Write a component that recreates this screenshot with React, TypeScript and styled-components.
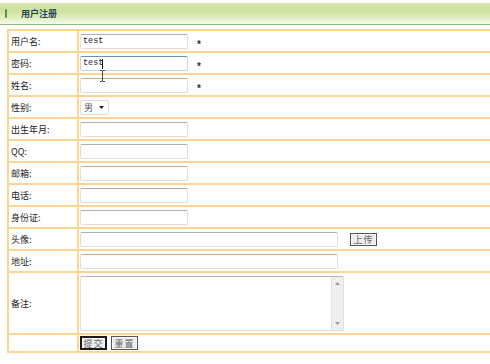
import React from "react";
import styled, { createGlobalStyle } from "styled-components";

const LINE = "#fbd591";

const Global = createGlobalStyle`
  html, body { margin: 0; padding: 0; background: #fff; overflow: hidden; }
  body { font-family: "Noto Sans CJK SC", "Liberation Sans", sans-serif; color: #333; }
`;

const Page = styled.div`
  position: relative;
  width: 490px;
  height: 364px;
  overflow: hidden;
  padding-top: 3px;
  box-sizing: border-box;
  background: #fff;
`;

const Header = styled.div`
  height: 21px;
  display: flex;
  align-items: center;
  gap: 14px;
  padding-left: 5px;
  background: linear-gradient(#d9e7b3 0%, #cde19c 35%, #dfecc0 70%, #f5f9ec 100%);
  border-bottom: 1px solid #97b583;
`;

const Marker = styled.span`
  width: 2px;
  height: 9px;
  border-radius: 1px;
  background: #5f9434;
`;

const Title = styled.span`
  font-size: 9px;
  font-weight: 700;
  color: #1f4552;
  line-height: 1;
`;

const Form = styled.div`
  margin: 4px 0 0 7px;
  width: 492px;
  border-top: 2px solid ${LINE};
  border-left: 2px solid ${LINE};
  display: grid;
  grid-template-columns: 70px 1fr;
`;

const Label = styled.div<{ $h: number }>`
  height: ${(p) => p.$h}px;
  box-sizing: border-box;
  border-right: 2px solid ${LINE};
  border-bottom: 2px solid ${LINE};
  display: flex;
  align-items: center;
  padding-left: 2px;
  font-size: 9px;
  color: #222;
`;

const Value = styled.div<{ $h: number }>`
  height: ${(p) => p.$h}px;
  box-sizing: border-box;
  border-bottom: 2px solid ${LINE};
  display: flex;
  align-items: center;
  padding-left: 1px;
  gap: 9px;
`;

const Field = styled.div`
  position: relative;
  display: flex;
`;

const Input = styled.input<{ $w?: number; $focus?: boolean }>`
  width: ${(p) => p.$w ?? 108}px;
  height: 15px;
  box-sizing: border-box;
  margin: 0;
  padding: 0 2px;
  border: 1px solid ${(p) => (p.$focus ? "#bcd3ec" : "#dedede")};
  border-top-color: ${(p) => (p.$focus ? "#6f8fb3" : "#adadad")};
  border-radius: 2px;
  background: #fff;
  font-family: "Liberation Mono", "DejaVu Sans Mono", monospace;
  font-size: 8.5px;
  color: #222;
  outline: none;
  caret-color: transparent;
`;

const Caret = styled.span`
  position: absolute;
  left: 22px;
  top: 3px;
  width: 1px;
  height: 10px;
  background: #111;
`;

const Star = styled.span`
  font-family: "Liberation Sans", sans-serif;
  font-size: 10px;
  font-weight: 700;
  color: #333;
  position: relative;
  top: 3px;
`;

const SelectBox = styled.div`
  width: 29px;
  height: 15px;
  box-sizing: border-box;
  border: 1px solid #dcdcdc;
  border-radius: 2px;
  background: #fff;
  display: flex;
  align-items: center;
  gap: 6px;
  padding-left: 3px;
  font-size: 9px;
  line-height: 1;
  color: #555;
`;

const AreaBox = styled.div`
  width: 264px;
  height: 55px;
  box-sizing: border-box;
  border: 1px solid #dedede;
  border-top-color: #b5b5b5;
  border-radius: 2px;
  display: flex;
`;

const Area = styled.textarea`
  flex: 1;
  margin: 0;
  border: none;
  resize: none;
  outline: none;
  overflow: hidden;
  font-size: 9px;
`;

const ScrollBar = styled.div`
  width: 11px;
  background: #efefef;
  border-left: 1px solid #e2e2e2;
  display: flex;
  flex-direction: column;
  justify-content: space-between;
  align-items: center;
  padding: 5px 0;
`;

const Button = styled.button<{ $primary?: boolean }>`
  width: 27px;
  height: 14px;
  box-sizing: border-box;
  margin: 0;
  padding: 0;
  border: ${(p) => (p.$primary ? "2px solid #1c1c1c" : "1px solid #555")};
  background: #ececec;
  font-family: "Noto Sans CJK SC", sans-serif;
  font-size: 9px;
  line-height: 1;
  color: #666;
  letter-spacing: 1px;
  box-shadow: inset 0 0 0 1px #f8f8f8;
`;

const Buttons = styled.div`
  display: flex;
  gap: 4px;
`;

const Upload = styled(Button)`
  margin-left: 3px;
  height: 13px;
`;

const IBeam = styled.svg`
  position: absolute;
  left: 99px;
  top: 70px;
`;

const rows: { label: string; value?: string; star?: boolean; focus?: boolean }[] = [
  { label: "用户名:", value: "test", star: true },
  { label: "密码:", value: "test", star: true, focus: true },
  { label: "姓名:", star: true },
];

const plain = ["出生年月:", "QQ:", "邮箱:", "电话:", "身份证:"];

export default function App() {
  return (
    <Page>
      <Global />
      <Header>
        <Marker />
        <Title>用户注册</Title>
      </Header>
      <Form>
        {rows.map((r) => (
          <React.Fragment key={r.label}>
            <Label $h={22}>{r.label}</Label>
            <Value $h={22}>
              <Field>
                <Input defaultValue={r.value ?? ""} $focus={r.focus} />
                {r.focus && <Caret />}
              </Field>
              {r.star && <Star>*</Star>}
            </Value>
          </React.Fragment>
        ))}
        <Label $h={22}>性别:</Label>
        <Value $h={22}>
          <SelectBox role="combobox" aria-expanded="false">
            男
            <svg width="5" height="3" viewBox="0 0 5 3">
              <path d="M0 0h5L2.5 3z" fill="#222" />
            </svg>
          </SelectBox>
        </Value>
        {plain.map((l) => (
          <React.Fragment key={l}>
            <Label $h={22}>{l}</Label>
            <Value $h={22}>
              <Input />
            </Value>
          </React.Fragment>
        ))}
        <Label $h={22}>头像:</Label>
        <Value $h={22}>
          <Input $w={258} />
          <Upload>上传</Upload>
        </Value>
        <Label $h={22}>地址:</Label>
        <Value $h={22}>
          <Input $w={258} />
        </Value>
        <Label $h={62}>备注:</Label>
        <Value $h={62}>
          <AreaBox>
            <Area />
            <ScrollBar>
              <svg width="5" height="3" viewBox="0 0 5 3">
                <path d="M0 3h5L2.5 0z" fill="#999" />
              </svg>
              <svg width="5" height="3" viewBox="0 0 5 3">
                <path d="M0 0h5L2.5 3z" fill="#999" />
              </svg>
            </ScrollBar>
          </AreaBox>
        </Value>
        <Label $h={18} />
        <Value $h={18}>
          <Buttons>
            <Button $primary>提交</Button>
            <Button>重置</Button>
          </Buttons>
        </Value>
      </Form>
      <IBeam width="7" height="12" viewBox="0 0 7 12">
        <path d="M1 0.5h2l0.5 0.5 0.5-0.5h2M3.5 1v10M1 11.5h2l0.5-0.5 0.5 0.5h2" stroke="#444" strokeWidth="1" fill="none" />
      </IBeam>
    </Page>
  );
}
